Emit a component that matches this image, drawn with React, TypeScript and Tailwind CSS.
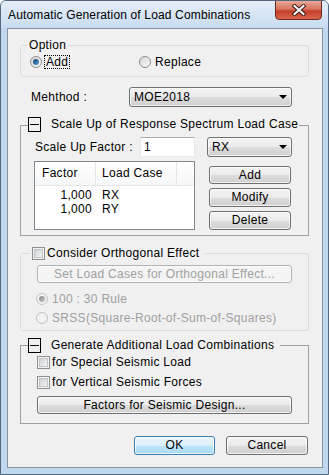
import React from 'react';

function Radio({ checked, disabled }: { checked?: boolean; disabled?: boolean }) {
  return (
    <span
      className={
        disabled
          ? 'flex h-[12px] w-[12px] shrink-0 items-center justify-center rounded-full border border-[#c2c2c2] bg-[#f2f2f2]'
          : 'flex h-[12px] w-[12px] shrink-0 items-center justify-center rounded-full border border-[#8e8f8f] bg-gradient-to-br from-[#d4d6d8] to-[#fbfbfb]'
      }
    >
      {checked && (
        <span
          className={
            disabled
              ? 'h-[6px] w-[6px] rounded-full bg-gradient-to-br from-[#8c8c8c] to-[#c8c8c8]'
              : 'h-[6px] w-[6px] rounded-full bg-gradient-to-br from-[#0d3a6b] to-[#5fa4dc]'
          }
        />
      )}
    </span>
  );
}

function Check() {
  return (
    <span className="flex h-[13px] w-[13px] shrink-0 items-center justify-center border border-[#8e8f8f] bg-[#f4f4f4]">
      <span className="h-[9px] w-[9px] border border-[#c0c3c8] bg-gradient-to-br from-[#cfd2d6] to-[#f5f5f5]" />
    </span>
  );
}

function Collapse() {
  return (
    <span className="flex h-[15px] w-[13px] shrink-0 items-center justify-center border border-black bg-[#f0f0f0]">
      <span className="h-[1px] w-[9px] bg-black" />
    </span>
  );
}

function Btn({
  children,
  className = '',
  disabled,
  primary,
}: {
  children: React.ReactNode;
  className?: string;
  disabled?: boolean;
  primary?: boolean;
}) {
  let look =
    'border-[#707070] bg-[linear-gradient(#f3f3f3_0%,#ebebeb_50%,#dddddd_51%,#cfcfcf_100%)] text-black';
  if (disabled) look = 'border-[#adb2b5] bg-[#f4f4f4] text-[#a0a0a0]';
  if (primary)
    look =
      'border-[#3c7fb1] bg-[linear-gradient(#eaf6fd_0%,#d9f0fc_50%,#bee6fd_51%,#a7d9f5_100%)] text-black';
  return (
    <div
      className={`flex items-center justify-center rounded-[3px] border shadow-[inset_0_0_0_1px_rgba(255,255,255,0.7)] ${look} ${className}`}
    >
      {children}
    </div>
  );
}

function Combo({ value, className = '' }: { value: string; className?: string }) {
  return (
    <div
      className={`flex h-[20px] items-center rounded-[3px] border border-[#707070] bg-[linear-gradient(#f3f3f3_0%,#ebebeb_50%,#dddddd_51%,#cfcfcf_100%)] pl-[4px] pr-[4px] shadow-[inset_0_0_0_1px_rgba(255,255,255,0.7)] ${className}`}
    >
      <span className="flex-1">{value}</span>
      <span className="h-0 w-0 border-x-[4px] border-t-[4px] border-x-transparent border-t-black" />
    </div>
  );
}

export default function App() {
  return (
    <div className="h-[475px] w-[329px] overflow-hidden rounded-t-[6px] border border-[#55677d] bg-[#c0d7f0] font-['Liberation_Sans',Arial,sans-serif] text-[12px] leading-[15px] tracking-[0.3px] text-black">
      {/* title bar */}
      <div className="flex h-[27px] bg-gradient-to-b from-[#e6eef8] to-[#c9dcf1]">
        <div className="pl-[7px] pt-[7px] tracking-[0.15px]">Automatic Generation of Load Combinations</div>
        <div className="-mt-[1px] ml-auto mr-[6px] flex h-[20px] w-[47px] items-center justify-center rounded-b-[4px] border border-[#6b2a21] bg-[linear-gradient(#e9a998_0%,#d7745f_45%,#c5402a_55%,#d8644a_100%)]">
          <svg width="14" height="12" viewBox="0 0 14 12">
            <path d="M2.5 2 L11.5 10 M11.5 2 L2.5 10" stroke="#3b1c16" strokeWidth="4" strokeLinecap="square" />
            <path d="M2.5 2 L11.5 10 M11.5 2 L2.5 10" stroke="#ffffff" strokeWidth="2" strokeLinecap="square" />
          </svg>
        </div>
      </div>

      {/* content */}
      <div className="ml-[6px] mr-[5px] h-[440px] border border-[#8a929c] bg-[#f0f0f0] px-[12px]">
        {/* Option */}
        <div className="mt-[16px] h-[32px] w-[289px] rounded-[3px] border border-[#d5dfe5]">
          <div className="-mt-[8px] ml-[6px] w-fit bg-[#f0f0f0] px-[2px]">Option</div>
          <div className="mt-[2px] flex h-[14px] items-center">
            <div className="ml-[9px] flex w-[109px] items-center">
              <Radio checked />
              <span className="ml-[3px] px-[1px] leading-[12px] outline outline-1 outline-dotted outline-black">Add</span>
            </div>
            <Radio />
            <span className="ml-[4px]">Replace</span>
          </div>
        </div>

        {/* Method */}
        <div className="mt-[10px] flex h-[20px] items-center">
          <span className="ml-[11px] w-[98px]">Mehthod :</span>
          <Combo value="MOE2018" className="w-[163px]" />
        </div>

        {/* Scale up */}
        <div className="mt-[18px] h-[111px] w-[289px] border border-[#a0a0a0]">
          <div className="-mt-[9px] ml-[7px] flex h-[15px] w-fit items-center bg-[#f0f0f0] pr-[1px]">
            <Collapse />
            <span className="ml-[10px]">Scale Up of Response Spectrum Load Case</span>
          </div>
          <div className="mt-[5px] flex h-[20px] items-center">
            <span className="ml-[14px] w-[105px]">Scale Up Factor :</span>
            <div className="flex h-[20px] w-[55px] items-center border border-[#e3e9ef] border-t-[#abadb3] bg-white pl-[3px]">1</div>
            <Combo value="RX" className="ml-[12px] w-[85px]" />
          </div>
          <div className="mt-[4px] flex items-start">
            <div className="ml-[13px] h-[69px] w-[161px] border border-[#828790] bg-white">
              <div className="flex h-[24px] border-b border-[#e5e5e5] bg-gradient-to-b from-white to-[#f6f7f8]">
                <div className="w-[61px] border-r border-[#e5e5e5] pl-[7px] leading-[23px]">Factor</div>
                <div className="w-[81px] border-r border-[#e5e5e5] pl-[6px] leading-[23px]">Load Case</div>
                <div className="flex-1" />
              </div>
              <div className="mt-[2px] flex h-[14px] items-center">
                <span className="w-[57px] text-right">1,000</span>
                <span className="ml-[10px]">RX</span>
              </div>
              <div className="flex h-[14px] items-center">
                <span className="w-[57px] text-right">1,000</span>
                <span className="ml-[10px]">RY</span>
              </div>
            </div>
            <div className="ml-[14px] flex flex-col gap-[4px] pt-[5px]">
              <Btn className="h-[18px] w-[82px]">Add</Btn>
              <Btn className="h-[19px] w-[82px]">Modify</Btn>
              <Btn className="h-[19px] w-[82px]">Delete</Btn>
            </div>
          </div>
        </div>

        {/* Orthogonal */}
        <div className="mt-[17px] h-[78px] w-[289px] rounded-[3px] border border-[#d5dfe5]">
          <div className="-mt-[8px] ml-[9px] flex h-[15px] w-fit items-center bg-[#f0f0f0] pl-[2px] pr-[6px]">
            <Check />
            <span className="ml-[2px]">Consider Orthogonal Effect</span>
          </div>
          <Btn disabled className="ml-[16px] mt-[4px] h-[18px] w-[255px]">
            Set Load Cases for Orthogonal Effect...
          </Btn>
          <div className="mt-[9px] flex h-[14px] items-center text-[#a0a0a0]">
            <span className="ml-[15px]">
              <Radio checked disabled />
            </span>
            <span className="ml-[4px]">100 : 30 Rule</span>
          </div>
          <div className="mt-[5px] flex h-[14px] items-center text-[#a0a0a0]">
            <span className="ml-[15px]">
              <Radio disabled />
            </span>
            <span className="ml-[4px]">SRSS(Square-Root-of-Sum-of-Squares)</span>
          </div>
        </div>

        {/* Generate additional */}
        <div className="mt-[14px] h-[79px] w-[289px] border border-[#a0a0a0]">
          <div className="-mt-[8px] ml-[7px] flex h-[15px] w-fit items-center bg-[#f0f0f0] pr-[6px]">
            <Collapse />
            <span className="ml-[10px]">Generate Additional Load Combinations</span>
          </div>
          <div className="mt-[2px] flex h-[14px] items-center">
            <span className="ml-[16px]">
              <Check />
            </span>
            <span className="ml-[2px]">for Special Seismic Load</span>
          </div>
          <div className="mt-[6px] flex h-[14px] items-center">
            <span className="ml-[16px]">
              <Check />
            </span>
            <span className="ml-[2px]">for Vertical Seismic Forces</span>
          </div>
          <Btn className="ml-[16px] mt-[7px] h-[18px] w-[255px]">Factors for Seismic Design...</Btn>
        </div>

        {/* OK / Cancel */}
        <div className="mr-[2px] mt-[12px] flex justify-end gap-[11px]">
          <Btn primary className="h-[19px] w-[81px]">OK</Btn>
          <Btn className="h-[19px] w-[82px]">Cancel</Btn>
        </div>
      </div>
    </div>
  );
}
